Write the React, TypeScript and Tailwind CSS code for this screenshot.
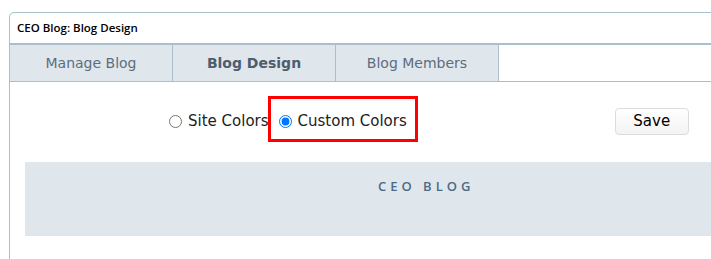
import React, { useState } from 'react';

const tabs = ['Manage Blog', 'Blog Design', 'Blog Members'];

const App: React.FC = () => {
  const [mode, setMode] = useState('custom');
  const active = 'Blog Design';

  return (
    <div className="w-[711px] h-[259px] overflow-hidden bg-white pl-[9px] pt-[12px]">
      <div className="w-[760px] h-[300px] border border-[#a9bfcc] rounded-tl-[5px] bg-white">
        {/* header */}
        <div
          className="h-[32px] flex items-center pl-[7px] text-[11.5px] font-semibold text-black border-b-2 border-[#a9bfcc]"
          style={{ fontFamily: '"Open Sans", sans-serif' }}
        >
          CEO Blog: Blog Design
        </div>

        {/* tabs */}
        <div className="flex h-[37px] border-b border-[#a9bfcc]" style={{ fontFamily: '"DejaVu Sans", Verdana, sans-serif' }}>
          {tabs.map(t => (
            <div
              key={t}
              className={
                'w-[163px] flex items-center justify-center bg-[#dfe7ed] border-r border-[#a9bfcc] text-[14px] ' +
                (t === active ? 'font-bold text-[#4d5d6d]' : 'text-[#5d6d7e]')
              }
            >
              {t}
            </div>
          ))}
        </div>

        {/* options */}
        <div className="relative flex items-center h-[80px] pb-[2px]" style={{ fontFamily: '"DejaVu Sans", Verdana, sans-serif' }}>
          <div className="flex items-center pl-[159px] text-[15px] text-[#222]">
            <label className="flex items-center">
              <input
                type="radio"
                name="colors"
                checked={mode === 'site'}
                onChange={() => setMode('site')}
                className="w-[13px] h-[13px] m-0 mr-[6px] accent-[#0075ff]"
              />
              Site Colors
            </label>
            <label className="flex items-center ml-[10px]">
              <input
                type="radio"
                name="colors"
                checked={mode === 'custom'}
                onChange={() => setMode('custom')}
                className="w-[13px] h-[13px] m-0 mr-[6px] accent-[#0075ff]"
              />
              Custom Colors
            </label>
          </div>
          <div className="absolute left-[258px] top-[14px] w-[150px] h-[46px] border-[3px] border-[#ff0000]" />
          <button className="ml-[208px] w-[74px] h-[27px] rounded-[4px] border border-[#dcdcdc] bg-gradient-to-b from-white to-[#f3f3f3] text-[15px] text-black">
            Save
          </button>
        </div>

        {/* banner */}
        <div className="ml-[15px] h-[74px] bg-[#dfe7ed] pt-[11px] pl-[353px]">
          <span
            className="text-[13px] font-semibold tracking-[4px] text-[#4d6a85]"
            style={{ fontFamily: '"Open Sans", sans-serif' }}
          >
            CEO BLOG
          </span>
        </div>
      </div>
    </div>
  );
};

export default App;
